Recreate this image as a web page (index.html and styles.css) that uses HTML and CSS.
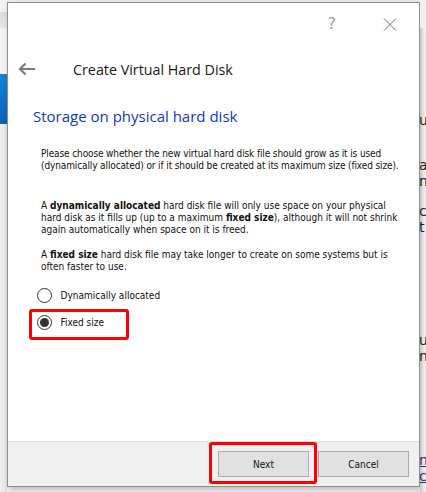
FILE: index.html
```html
<!DOCTYPE html>
<html>
<head>
<meta charset="utf-8">
<link rel="stylesheet" href="styles.css">
</head>
<body>
<div class="screen">
  <div class="side side-left">
    <div class="sl-top"></div>
    <div class="sl-band"></div>
    <div class="sl-white"></div>
    <div class="sl-blue"></div>
    <div class="sl-rest"></div>
  </div>
  <div class="dialog">
    <div class="titlebar">
      <span class="help">?</span>
      <svg class="close" width="14" height="13" viewBox="0 0 14 13"><path d="M1 0.5L13 12.5M13 0.5L1 12.5" stroke="#707070" stroke-width="1" fill="none"/></svg>
    </div>
    <div class="header">
      <svg class="back" width="18" height="14" viewBox="0 0 18 14"><path d="M17 7H2.5M7.5 1.5L2 7L7.5 12.5" stroke="#7a7a7a" stroke-width="2.2" fill="none"/></svg>
      <span class="title">Create Virtual Hard Disk</span>
    </div>
    <div class="content">
      <h1 class="heading">Storage on physical hard disk</h1>
      <p class="para p1">Please choose whether the new virtual hard disk file should grow as it is used<br>(dynamically allocated) or if it should be created at its maximum size (fixed size).</p>
      <p class="para p2">A <b>dynamically allocated</b> hard disk file will only use space on your physical<br>hard disk as it fills up (up to a maximum <b>fixed size</b>), although it will not shrink<br>again automatically when space on it is freed.</p>
      <p class="para p3">A <b>fixed size</b> hard disk file may take longer to create on some systems but is<br>often faster to use.</p>
      <div class="radios">
        <label class="radio"><span class="dot"></span><span>Dynamically allocated</span></label>
        <label class="radio checked"><span class="dot"></span><span>Fixed size</span><span class="mark mark-radio"></span></label>
      </div>
    </div>
    <div class="footer">
      <div class="btnwrap"><button class="btn">Next</button><span class="mark mark-btn"></span></div>
      <button class="btn">Cancel</button>
    </div>
  </div>
  <div class="side side-right">
    <div class="sr-top"></div>
    <div class="sr-body">
      <span class="frag f1">u</span>
      <span class="frag f2">a</span>
      <span class="frag f3">n</span>
      <span class="frag f4">ca</span>
      <span class="frag f5">t</span>
      <span class="frag f6">up</span>
      <span class="frag f7">n</span>
      <span class="frag f8 ul">na</span>
      <span class="frag f9 ul">c</span>
    </div>
  </div>
</div>
</body>
</html>
```
FILE: styles.css
```css
* { box-sizing: border-box; }
html, body { margin: 0; padding: 0; }
body {
  width: 426px;
  height: 492px;
  overflow: hidden;
  background: #f0f0f0;
  font-family: "Open Sans", "Noto Sans", sans-serif;
}
.screen {
  display: grid;
  grid-template-columns: 7px 413px 6px;
  height: 492px;
}
.side { height: 492px; overflow: hidden; }
.side-left { display: flex; flex-direction: column; }
.sl-top { height: 12px; background: #f2f2f2; }
.sl-band { height: 16px; background: linear-gradient(#dcdcdc, #e6e6e6); }
.sl-white { height: 46px; background: #f4f4f4; }
.sl-blue { height: 50px; background: linear-gradient(#1383d8, #0a62b8); }
.sl-rest { flex: 1; background: linear-gradient(90deg, #efefef, #e4e4e4); }

.side-right { display: flex; flex-direction: column; }
.sr-top { height: 28px; background: #f0f0f0; }
.sr-body {
  flex: 1;
  position: relative;
  background: linear-gradient(90deg, #c4c4c4 0, #e2e2e2 3px, #f2f2f2 6px);
  font-family: "DejaVu Sans", sans-serif;
  font-size: 14px;
  color: #222;
}
.frag { position: absolute; left: -1px; line-height: 14px; }
.f1 { top: 85px; }
.f2 { top: 130px; }
.f3 { top: 146px; }
.f4 { top: 176px; }
.f5 { top: 192px; }
.f6 { top: 305px; }
.f7 { top: 321px; }
.f8 { top: 425px; color: #3a2a7a; }
.f9 { top: 441px; color: #3a2a7a; }
.ul { text-decoration: underline; }

.dialog {
  margin-top: 2px;
  height: 485px;
  background: #fff;
  border: 1px solid #8e8e8e;
  display: flex;
  flex-direction: column;
  box-shadow: 2px 2px 6px rgba(0,0,0,0.25);
}
.titlebar {
  height: 40px;
  display: flex;
  justify-content: flex-end;
  align-items: flex-start;
  padding-right: 22px;
  padding-top: 12px;
  gap: 47px;
}
.help {
  font-family: "DejaVu Sans", sans-serif;
  font-size: 16px;
  line-height: 18px;
  color: #a0a0a0;
}
.close { display: block; margin-top: 3px; }
.header {
  height: 50px;
  display: flex;
  align-items: flex-start;
  padding-left: 10px;
}
.back { display: block; margin-top: 18.5px; }
.title {
  margin-left: 37px;
  margin-top: 16.5px;
  font-size: 14.3px;
  line-height: 20px;
  color: #1a1a1a;
}
.content {
  flex: 1;
  padding: 0 0 0 25px;
}
.heading {
  margin: 12px 0 0 0;
  font-weight: 400;
  font-size: 15px;
  color: #0b3cc2;
  line-height: 22px;
}
.para {
  margin: 0;
  padding-left: 8px;
  font-family: "DejaVu Sans Condensed", "DejaVu Sans", sans-serif;
  font-stretch: condensed;
  font-size: 10px;
  line-height: 12px;
  color: #111;
  white-space: nowrap;
}
.para b { font-weight: 700; }
.p1 { margin-top: 20.5px; letter-spacing: -0.12px; }
.p2 { margin-top: 28px; }
.p3 { margin-top: 13px; }
.radios {
  margin-top: 14.5px;
  display: flex;
  flex-direction: column;
  gap: 11px;
  padding-left: 4px;
}
.radio {
  position: relative;
  display: flex;
  align-items: center;
  gap: 8.5px;
  height: 16px;
  font-family: "DejaVu Sans Condensed", "DejaVu Sans", sans-serif;
  font-stretch: condensed;
  font-size: 10px;
  color: #111;
}
.dot {
  width: 15px;
  height: 15px;
  border: 1px solid #333;
  border-radius: 50%;
  background: #fff;
  display: flex;
  align-items: center;
  justify-content: center;
}
.checked .dot::after {
  content: "";
  width: 9px;
  height: 9px;
  border-radius: 50%;
  background: #333;
}
.mark {
  position: absolute;
  border: 3px solid #ff0000;
  border-radius: 3px;
}
.mark-radio { left: -8px; top: -5px; width: 100px; height: 31px; }
.footer {
  height: 45px;
  background: #f0f0f0;
  border-top: 1px solid #dfdfdf;
  display: flex;
  justify-content: flex-end;
  align-items: center;
  gap: 9px;
  padding-right: 10px;
}
.btnwrap { position: relative; display: flex; }
.btn {
  width: 91px;
  height: 26px;
  background: #e1e1e1;
  border: 1px solid #adadad;
  font-family: "DejaVu Sans Condensed", "DejaVu Sans", sans-serif;
  font-stretch: condensed;
  font-size: 10px;
  color: #111;
  padding: 0;
}
.mark-btn { left: -9px; top: -9px; width: 108px; height: 42px; }
```
